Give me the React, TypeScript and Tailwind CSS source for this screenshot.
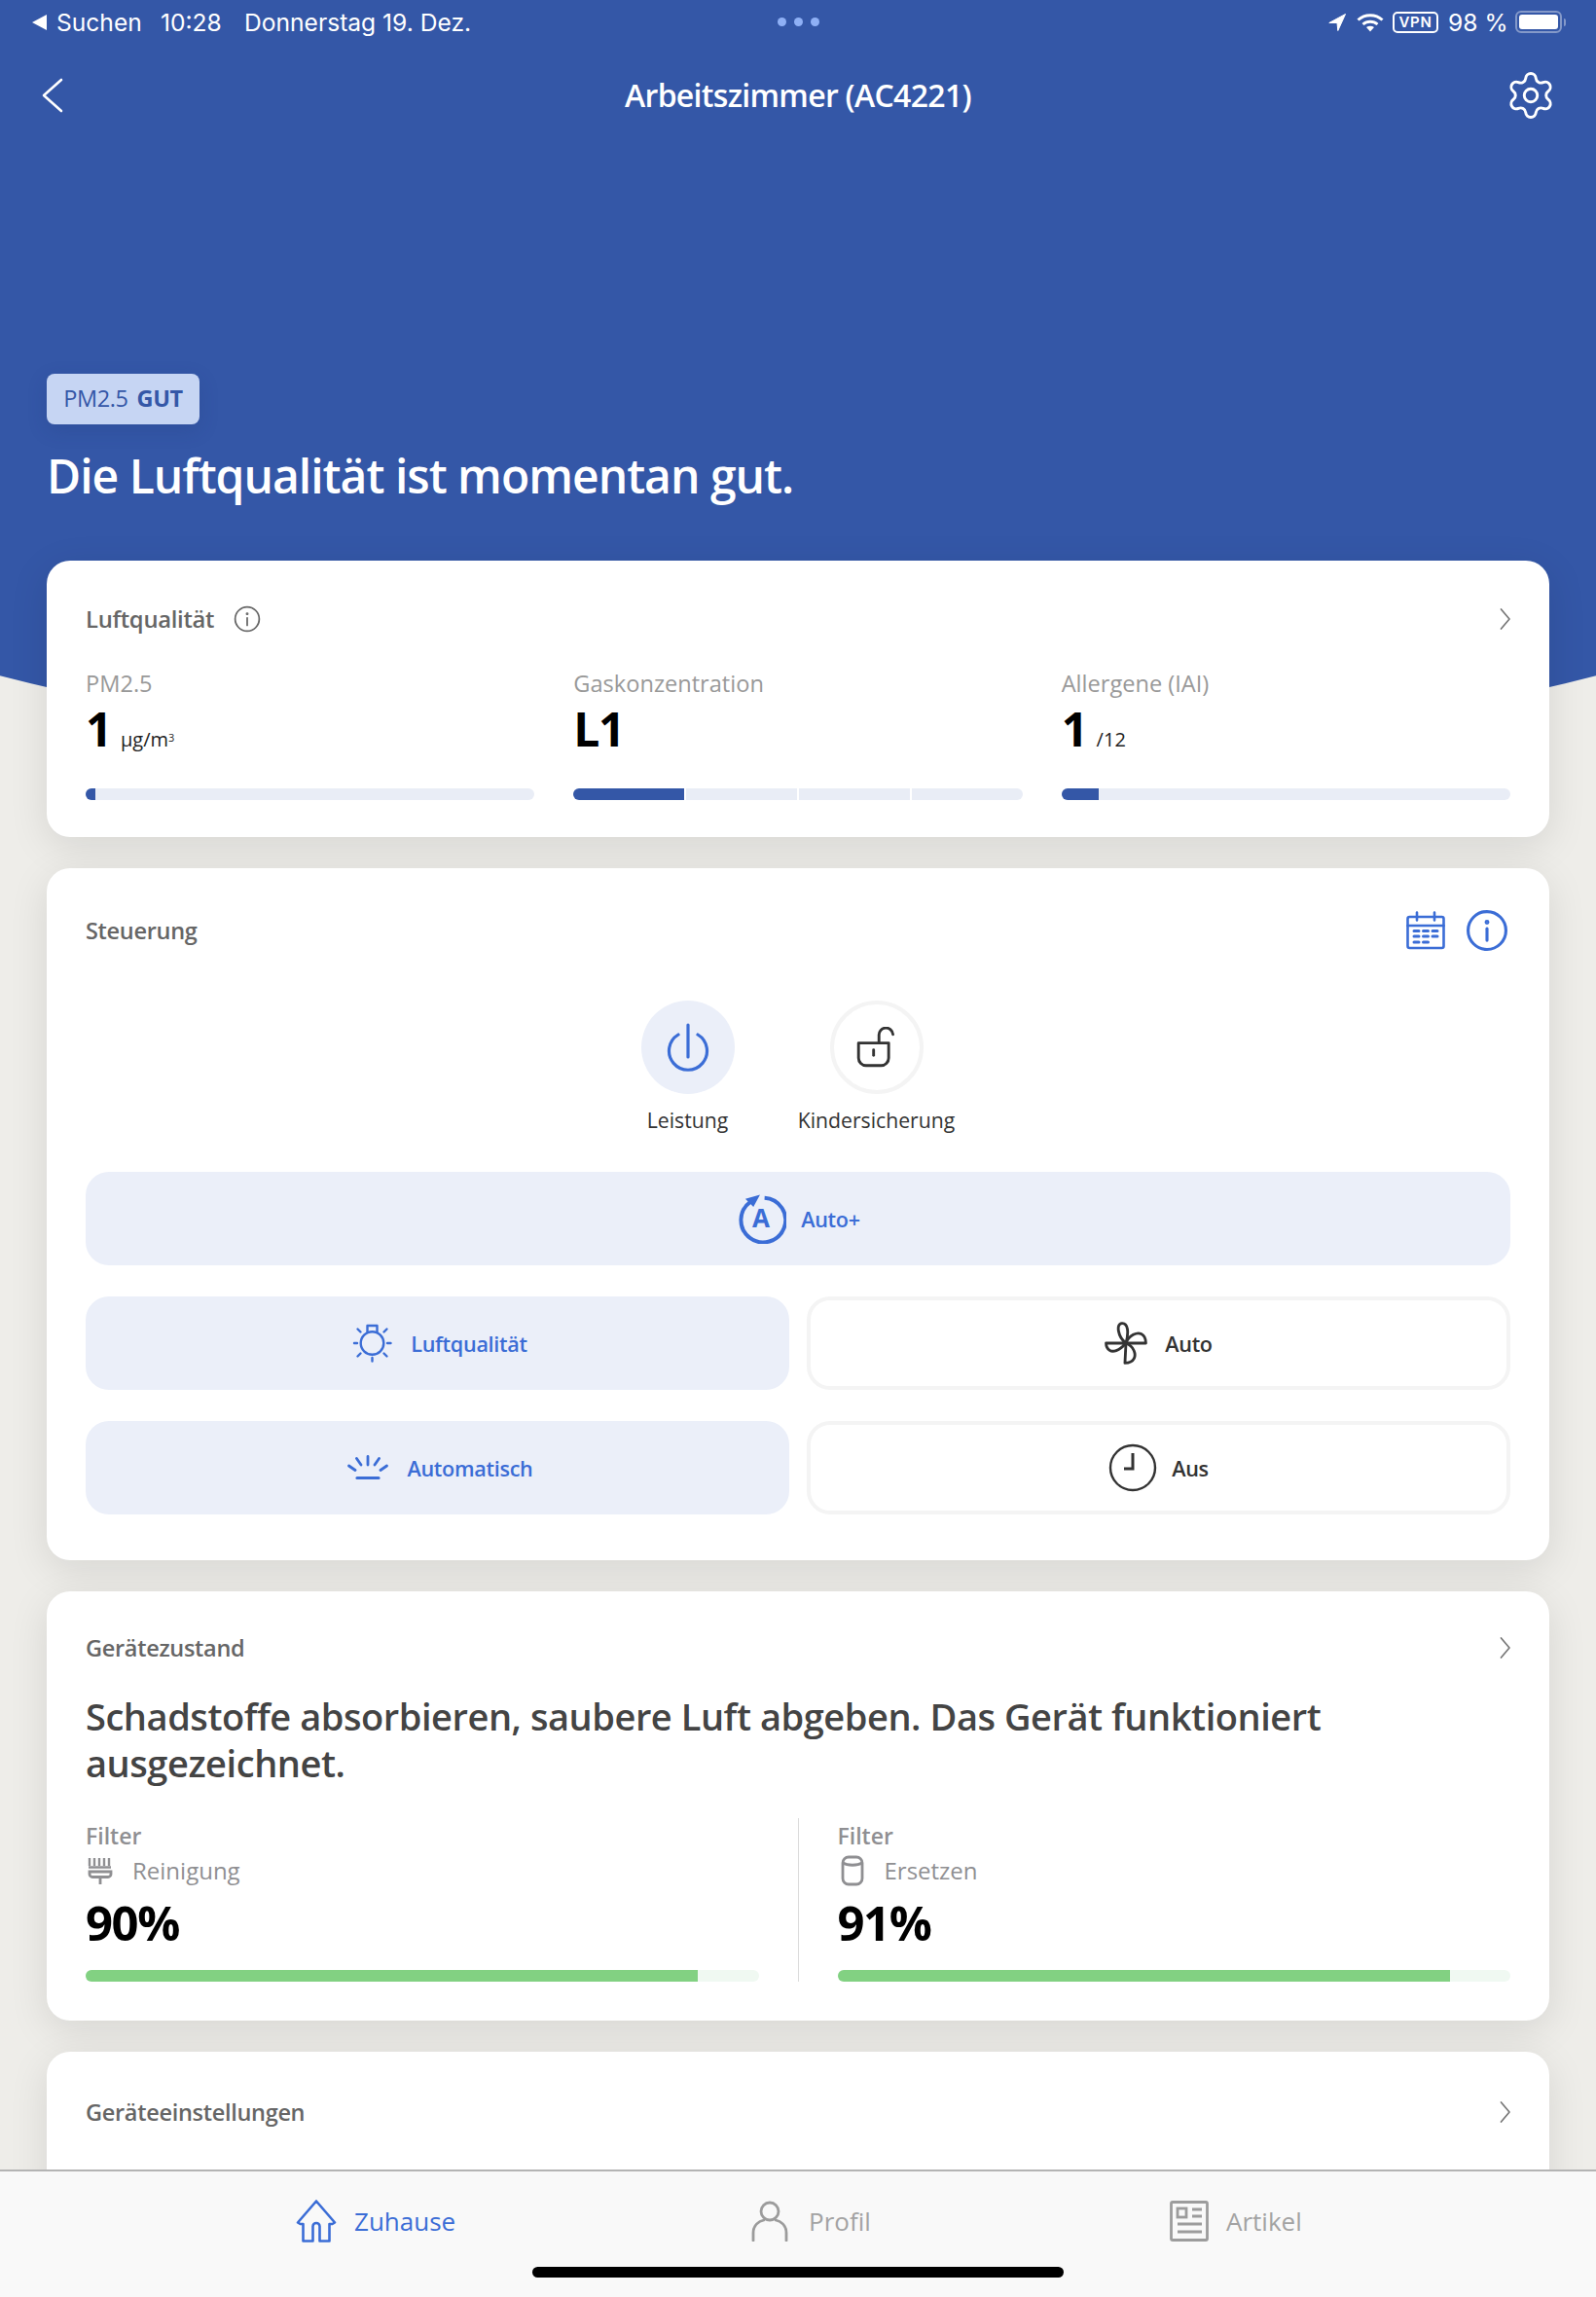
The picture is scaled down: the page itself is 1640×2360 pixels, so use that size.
import { Settings } from "lucide-react";
import React from "react";

const FONT = "font-['Open_Sans','Noto_Sans',sans-serif]";
const BLUE = "#3b6dd6";

function InfoIcon({ size = 28, color = "#666", sw = 1.5 }: { size?: number; color?: string; sw?: number }) {
  return (
    <svg width={size} height={size} viewBox="0 0 24 24" fill="none" stroke={color} strokeWidth={sw} strokeLinecap="round">
      <circle cx="12" cy="12" r="10.6" />
      <path d="M12 11v6.5" />
      <circle cx="12" cy="7.4" r="0.5" fill={color} />
    </svg>
  );
}

function Chevron() {
  return (
    <svg width="14" height="24" viewBox="0 0 14 24" fill="none" stroke="#777" strokeWidth="1.7" strokeLinecap="round" strokeLinejoin="round" className="mr-[-2px]">
      <path d="M2.5 2 11 12l-8.5 10" />
    </svg>
  );
}

function CalendarIcon() {
  return (
    <svg width="42" height="42" viewBox="0 0 42 42" fill="none" stroke={BLUE} strokeWidth="2.6" strokeLinecap="round" strokeLinejoin="round">
      <rect x="2.5" y="7" width="37" height="32" rx="2" />
      <path d="M2.5 16h37M12 2.5v8M30 2.5v8" />
      <path d="M9 21.5h5M18.5 21.5h5M28 21.5h5M9 27h5M18.5 27h5M28 27h5M9 33h5M18.5 33h5" strokeWidth="3" />
    </svg>
  );
}

function PowerIcon() {
  return (
    <svg width="44" height="50" viewBox="0 0 44 50" fill="none" stroke={BLUE} strokeWidth="3.2" strokeLinecap="round">
      <path d="M22 2v33" />
      <path d="M12 12a19.5 19.5 0 1 0 20 0" />
    </svg>
  );
}

function LockIcon() {
  return (
    <svg width="42" height="42" viewBox="0 0 38 38" fill="none" stroke="#333" strokeWidth="2.6" strokeLinecap="round">
      <path d="M2 15h28v14a7 7 0 0 1-7 7H9a7 7 0 0 1-7-7z" strokeLinejoin="round" />
      <path d="M16 21.5v5" />
      <path d="M21 14V8a6.5 6.5 0 0 1 13-1" />
    </svg>
  );
}

function AutoPlusIcon() {
  return (
    <svg width="52" height="52" viewBox="0 0 50 50" fill="none">
      <path d="M14.5 8.5a22 22 0 1 0 14-4" stroke={BLUE} strokeWidth="3.8" />
      <path d="M9.5 5.5 24 1.5l-6.5 12z" fill={BLUE} />
      <text x="25" y="34" textAnchor="middle" fontSize="25" fontWeight="700" fill={BLUE} fontFamily="Open Sans">A</text>
    </svg>
  );
}

function BulbRaysIcon() {
  return (
    <svg width="42" height="40" viewBox="0 0 42 40" fill="none" stroke={BLUE} strokeWidth="2.4" strokeLinecap="round">
      <circle cx="20.5" cy="20" r="11.8" />
      <path d="M15.5 9V2h10v7" strokeLinecap="butt" strokeLinejoin="round" />
      <path d="M2 20h3M36 20h3.5M20.5 35v3.5M5.5 5.5l3 3M35.5 5.5l-3 3M5.5 33.5l3-3M35.5 33.5l-3-3" />
    </svg>
  );
}

function FanIcon() {
  return (
    <svg width="44" height="44" viewBox="0 0 42 42" fill="none" stroke="#333" strokeWidth="2.7" strokeLinejoin="round">
      <path d="M21 21C13 15 11 2 17 1.5c6-.5 7 8.5 4 19.5z" />
      <path d="M21 21c3-8 11-11 15-9 4 2 4.5 7 4.5 9z" />
      <path d="M21 21c8 3 10 11 8 15-2 4-7 4.5-9 4.5z" />
      <path d="M21 21c-7 8-13 9-16 7-3-2-3.5-6-3.5-7z" />
    </svg>
  );
}

function ClockIcon() {
  return (
    <svg width="50" height="50" viewBox="0 0 50 50" fill="none" stroke="#333" strokeWidth="2.4">
      <circle cx="25" cy="25" r="23" />
      <path d="M25 10v16h-9" strokeWidth="3" />
    </svg>
  );
}

function GlowIcon() {
  return (
    <svg width="42" height="26" viewBox="0 0 42 26" fill="none" stroke={BLUE} strokeWidth="2.8" strokeLinecap="round">
      <path d="M10 23.5h22" strokeWidth="3.2" />
      <path d="M21 1.5v8.5M9.5 3.5 14 10M32.5 3.5 28 10M1.5 11 8 15.5M40.5 11 34 15.5" />
    </svg>
  );
}

function BrushIcon() {
  return (
    <svg width="26" height="28" viewBox="0 0 26 28" fill="none" stroke="#8f8f92" strokeWidth="2.4">
      <path d="M2 1v8M7 1v8M12 1v8M17 1v8M22 1v8M1 10.5h23" />
      <path d="M2 15h22v2.5a3 3 0 0 1-3 3H5a3 3 0 0 1-3-3zM13 21v7" strokeWidth="2.8" />
    </svg>
  );
}

function FilterIcon() {
  return (
    <svg width="24" height="32" viewBox="0 0 24 32" fill="none" stroke="#8f8f92" strokeWidth="2.8">
      <rect x="2" y="2" width="20" height="28" rx="6" />
      <path d="M2 8c5 3 15 3 20 0" />
    </svg>
  );
}

function HomeIcon() {
  return (
    <svg width="42" height="44" viewBox="0 0 42 44" fill="none" stroke={BLUE} strokeWidth="2.6" strokeLinejoin="round">
      <path d="M21 1.5 2 23.5l2.5 1.5h3v17.5h10V27.5a3.5 3.5 0 0 1 7 0v15h10V25h3l2.5-1.5z" />
    </svg>
  );
}

function PersonIcon() {
  return (
    <svg width="38" height="42" viewBox="0 0 38 42" fill="none" stroke="#9c9c9c" strokeWidth="2.8" strokeLinecap="round">
      <circle cx="19" cy="11" r="9" />
      <path d="M2 41v-8c0-8 6-12 11-13M36 41v-8c0-8-6-12-11-13" />
    </svg>
  );
}

function ArticleIcon() {
  return (
    <svg width="40" height="42" viewBox="0 0 40 42" fill="none" stroke="#9c9c9c" strokeWidth="2.8">
      <rect x="1.5" y="1.5" width="37" height="39" rx="1.5" />
      <rect x="8" y="8" width="9" height="9" />
      <path d="M23 9h10M23 16h10M8 24h25M8 32h25" />
    </svg>
  );
}

function Bar({ value, fill, track }: { value: number; fill: string; track: string }) {
  return (
    <div className="h-3 rounded-md overflow-hidden" style={{ background: track }}>
      <div className="h-full" style={{ width: `${value}%`, background: fill }} />
    </div>
  );
}

function Reading({ label, value, unit, children }: { label: string; value: string; unit?: React.ReactNode; children: React.ReactNode }) {
  return (
    <div className="flex-1">
      <div className="text-[23.6px] leading-8 text-[#999]">{label}</div>
      <div className="flex items-baseline gap-[10px] h-[62px]">
        <span className="text-[48px] leading-[62px] font-bold text-black tracking-[-1.5px]">{value}</span>
        {unit && <span className="text-[20px] text-[#222]">{unit}</span>}
      </div>
      <div className="mt-[30px]">{children}</div>
    </div>
  );
}

function ModeButton({ active, icon, label, gap = "gap-[20px]" }: { active?: boolean; icon: React.ReactNode; label: string; gap?: string }) {
  return (
    <div
      className={
        active
          ? `h-[96px] rounded-[24px] bg-[#ebeff9] text-[#3b6dd6] flex items-center justify-center ${gap}`
          : `h-[96px] rounded-[24px] border-[4px] border-[#f4f4f4] bg-white text-[#333] flex items-center justify-center ${gap}`
      }
    >
      {icon}
      <span className="pt-[2px] text-[21.6px] font-semibold tracking-[-0.3px]">{label}</span>
    </div>
  );
}

function FilterStat({ sub, icon, value }: { sub: string; icon: React.ReactNode; value: number }) {
  return (
    <div className="flex-1">
      <div className="text-[23px] leading-[32px] font-semibold text-[#8f8f92] mt-[2px]">Filter</div>
      <div className="flex items-center gap-[18px] h-[40px] text-[24px] text-[#8f8f92]">
        <span className="w-[30px] flex justify-center">{icon}</span>
        {sub}
      </div>
      <div className="text-[49px] leading-[64px] font-bold text-black tracking-[-1.4px] mt-[1px]">{value}%</div>
      <div className="mt-[17px]">
        <Bar value={91} fill="#82d182" track="#f0f9f2" />
      </div>
    </div>
  );
}

export default function App() {
  return (
    <div className={`relative w-[1640px] h-[2360px] overflow-hidden bg-[#eeede9] ${FONT}`}>
      {/* curved blue backdrop */}
      <div className="absolute left-[-380px] top-0 w-[2400px] h-[784px] bg-[#3457a7] rounded-[0_0_1200px_1200px/0_0_333px_333px]" />

      <div className="relative">
        {/* status bar */}
        <div className="h-[46px] flex items-center justify-between pl-[33px] pr-[31px] text-white text-[24.6px] font-['Inter','Roboto',sans-serif] font-normal">
          <div className="flex items-center">
            <span className="w-0 h-0 border-y-[8px] border-y-transparent border-r-[15px] border-r-white mr-[10px]" />
            <span className="w-[107px]">Suchen</span>
            <span className="w-[86px]">10:28</span>
            <span>Donnerstag 19. Dez.</span>
          </div>
          <div className="flex items-center gap-[8px] absolute left-[799px] top-[18px]">
            <span className="w-[9px] h-[9px] rounded-full bg-[#8fb0f5]" />
            <span className="w-[9px] h-[9px] rounded-full bg-[#8fb0f5]" />
            <span className="w-[9px] h-[9px] rounded-full bg-[#8fb0f5]" />
          </div>
          <div className="flex items-center">
            <svg width="18" height="18" viewBox="0 0 18 18" fill="white" stroke="white" strokeWidth="1" strokeLinejoin="round" className="mr-[11px]">
              <path d="M17.5.5.8 9.5h8.2l.8 8z" />
            </svg>
            <svg width="28" height="20" viewBox="0 0 28 20" fill="none" stroke="white" strokeWidth="3" className="mr-[9px]">
              <path d="M1.5 7.5c7-6.5 18-6.500 25 0M6.500 12c4.300-3.800 10.700-3.800 15 0" />
              <path d="M10 15 14 19.500 18 15c-2.300-1.600-5.700-1.600-8 0z" fill="white" stroke="none" />
            </svg>
            <span className="w-[47px] h-[22px] rounded-[5px] border-2 border-white flex items-center justify-center text-[15px] font-semibold tracking-[0.6px] mr-[10px]">VPN</span>
            <span className="w-[69px]">98 %</span>
            <span className="w-[48px] h-[23px] rounded-[6px] border-2 border-[#8499c9] p-[2px]">
              <span className="block h-full w-full rounded-[3px] bg-white" />
            </span>
            <span className="w-[2px] h-[8px] ml-[2px] rounded-r-sm bg-[#8499c9]" />
          </div>
        </div>

        {/* nav */}
        <div className="h-[104px] grid grid-cols-[1fr_auto_1fr] items-center px-[40px]">
          <svg width="22" height="36" viewBox="0 0 22 36" fill="none" stroke="white" strokeWidth="2.6" strokeLinecap="round" strokeLinejoin="round" className="ml-[3px]">
            <path d="M20 2 2 18l18 16" />
          </svg>
          <div className="text-[32px] font-semibold text-white tracking-[-0.7px]">Arbeitszimmer (AC4221)</div>
          <Settings size={54} strokeWidth={1.3} color="white" className="justify-self-end" />
        </div>

        {/* hero */}
        <div className="px-12 pt-[234px]">
          <div className="w-[157px] h-[52px] rounded-[8px] bg-[#c6d5f3] shadow-[0_6px_20px_rgba(30,50,110,0.18)] flex items-center justify-center gap-[9px] text-[23.5px] tracking-[-0.4px] text-[#3457a7]">
            <span>PM2.5</span>
            <span className="font-bold">GUT</span>
          </div>
          <h1 className="mt-[22px] h-[58px] text-[48px] leading-[62px] font-semibold text-white tracking-[-1px]">
            Die Luftqualität ist momentan gut.
          </h1>
        </div>

        {/* cards */}
        <div className="px-12 pt-[60px] flex flex-col gap-[32px]">
          <section className="h-[284px] rounded-[24px] bg-white px-10 pt-[40px] shadow-[0_10px_40px_rgba(0,0,0,0.1)]">
            <div className="flex items-center justify-between h-[40px]">
              <div className="flex items-center gap-[20px]">
                <span className="pt-[2px] text-[23.8px] font-semibold text-[#666] tracking-[-0.3px]">Luftqualität</span>
                <InfoIcon />
              </div>
              <Chevron />
            </div>
            <div className="flex gap-10 mt-[30px]">
              <Reading
                label="PM2.5"
                value="1"
                unit={
                  <>
                    µg/m<sup className="text-[11px]">3</sup>
                  </>
                }
              >
                <Bar value={2.2} fill="#3457a7" track="#e9edf6" />
              </Reading>
              <Reading label="Gaskonzentration" value="L1">
                <div className="flex gap-[2px] rounded-md overflow-hidden">
                  <div className="flex-1 h-3 bg-[#3457a7]" />
                  <div className="flex-1 h-3 bg-[#e9edf6]" />
                  <div className="flex-1 h-3 bg-[#e9edf6]" />
                  <div className="flex-1 h-3 bg-[#e9edf6]" />
                </div>
              </Reading>
              <Reading label="Allergene (IAI)" value="1" unit="/12">
                <Bar value={8.3} fill="#3457a7" track="#e9edf6" />
              </Reading>
            </div>
          </section>

          <section className="h-[711px] rounded-[24px] bg-white px-10 pt-[42px] shadow-[0_10px_40px_rgba(0,0,0,0.1)]">
            <div className="flex items-center justify-between h-[44px]">
              <span className="pt-[2px] text-[23.5px] font-semibold text-[#666] tracking-[-0.3px]">Steuerung</span>
              <div className="flex items-center gap-[20px] mr-[2px]">
                <CalendarIcon />
                <InfoIcon size={44} color={BLUE} sw={1.7} />
              </div>
            </div>
            <div className="flex justify-center ml-[-33px] gap-[98px] mt-[50px]">
              <div className="w-[96px] flex flex-col items-center">
                <div className="w-[96px] h-[96px] rounded-full bg-[#ebeff9] flex items-center justify-center">
                  <PowerIcon />
                </div>
                <span className="mt-[11px] text-[21.2px] leading-[32px] text-[#333] whitespace-nowrap">Leistung</span>
              </div>
              <div className="w-[96px] flex flex-col items-center">
                <div className="w-[96px] h-[96px] rounded-full border-[4px] border-[#f4f4f4] flex items-center justify-center">
                  <LockIcon />
                </div>
                <span className="mt-[11px] text-[21.2px] leading-[32px] text-[#333] whitespace-nowrap">Kindersicherung</span>
              </div>
            </div>
            <div className="mt-[37px] flex flex-col gap-[32px]">
              <ModeButton active icon={<AutoPlusIcon />} label="Auto+" gap="gap-[15px]" />
              <div className="grid grid-cols-2 gap-[18px]">
                <ModeButton active icon={<BulbRaysIcon />} label="Luftqualität" gap="gap-[18px] pl-[5px]" />
                <ModeButton icon={<FanIcon />} label="Auto" gap="gap-[18px]" />
              </div>
              <div className="grid grid-cols-2 gap-[18px]">
                <ModeButton active icon={<GlowIcon />} label="Automatisch" gap="gap-[19px] pl-[6px]" />
                <ModeButton icon={<ClockIcon />} label="Aus" gap="gap-[15px]" />
              </div>
            </div>
          </section>

          <section className="h-[441px] rounded-[24px] bg-white px-10 pt-[38px] shadow-[0_10px_40px_rgba(0,0,0,0.1)]">
            <div className="flex items-center justify-between h-[40px]">
              <span className="pt-[2px] text-[23.5px] font-semibold text-[#666] tracking-[-0.3px]">Gerätezustand</span>
              <Chevron />
            </div>
            <h2 className="mt-[26px] text-[38px] leading-[48px] font-semibold text-[#444] tracking-[-0.45px]">
              Schadstoffe absorbieren, saubere Luft abgeben. Das Gerät funktioniert ausgezeichnet.
            </h2>
            <div className="flex mt-[33px] gap-[40px] h-[168px]">
              <FilterStat sub="Reinigung" icon={<BrushIcon />} value={90} />
              <div className="w-px bg-[#dcdcdc] self-stretch" />
              <FilterStat sub="Ersetzen" icon={<FilterIcon />} value={91} />
            </div>
          </section>

          <section className="h-[160px] rounded-[24px] bg-white px-10 pt-[42px] shadow-[0_10px_40px_rgba(0,0,0,0.1)]">
            <div className="flex items-center justify-between h-[40px]">
              <span className="pt-[2px] text-[23.5px] font-semibold text-[#666] tracking-[-0.3px]">Geräteeinstellungen</span>
              <Chevron />
            </div>
          </section>
        </div>
      </div>

      {/* tab bar */}
      <div className="absolute left-0 right-0 bottom-0 h-[131px] bg-[#f9f9f9] border-t-2 border-[#b4b4b4]">
        <div className="flex h-[102px] items-center pl-[304px]">
          <div className="w-[468px] flex items-center gap-[18px] text-[26px] text-[#3b6dd6]">
            <HomeIcon />
            Zuhause
          </div>
          <div className="w-[430px] flex items-center gap-[21px] text-[26px] text-[#a3a3a3]">
            <PersonIcon />
            Profil
          </div>
          <div className="flex items-center gap-[18px] text-[26px] text-[#a3a3a3]">
            <ArticleIcon />
            Artikel
          </div>
        </div>
        <div className="mx-auto w-[546px] h-[11px] rounded-full bg-black mt-[-4px]" />
      </div>
    </div>
  );
}
